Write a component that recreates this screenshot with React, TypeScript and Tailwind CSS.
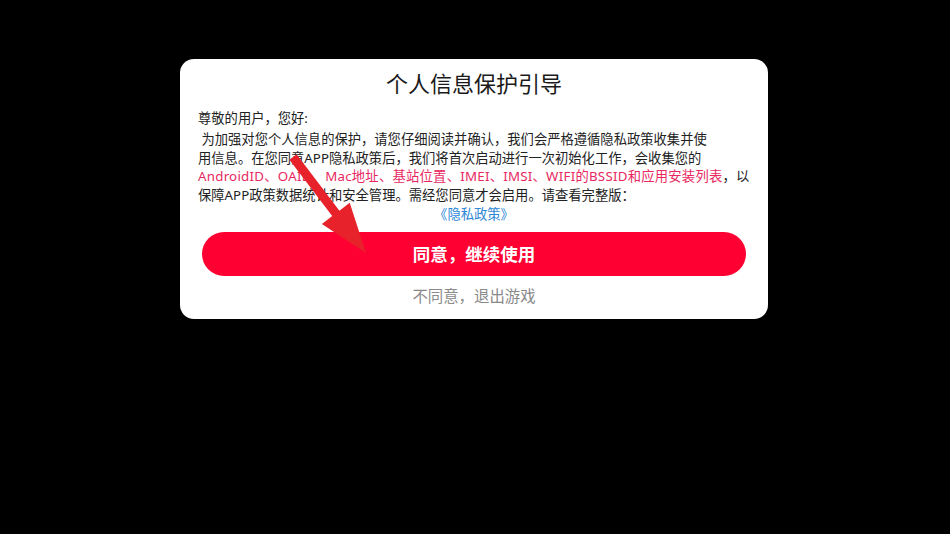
import React from "react";

const font = { fontFamily: '"Noto Sans", "Noto Sans CJK SC", sans-serif' };

export default function App() {
  return (
    <div className="relative w-[950px] h-[534px] bg-black overflow-hidden" style={font}>
      <div className="pt-[59px]">
        <div className="ml-[180px] w-[588px] rounded-[14px] bg-white px-[18px] pt-[9px] pb-[12px]">
          <h1 className="text-center text-[22px] leading-[30px] text-[#1a1a1a]">个人信息保护引导</h1>

          <div className="mt-[11px] text-[13.3px] leading-[18.8px] text-[#222]">
            <p className="mb-[2px]">尊敬的用户，您好:</p>
            <p className="whitespace-pre">{" 为加强对您个人信息的保护，请您仔细阅读并确认，我们会严格遵循隐私政策收集并使"}</p>
            <p>用信息。在您同意APP隐私政策后，我们将首次启动进行一次初始化工作，会收集您的</p>
            <p className="whitespace-nowrap tracking-[0.25px]">
              <span className="text-[#e8285f]">AndroidID、OAID、Mac地址、基站位置、IMEI、IMSI、WIFI的BSSID和应用安装列表</span>，以
            </p>
            <p>保障APP政策数据统计和安全管理。需经您同意才会启用。请查看完整版：</p>
            <p className="text-center text-[#2b86d6]">《隐私政策》</p>
          </div>

          <button className="mt-[8px] mx-[4px] w-[544px] h-[44px] rounded-full bg-[#ff0033] text-white text-[17.5px] font-bold">
            同意，继续使用
          </button>

          <p className="mt-[11px] text-center text-[15.4px] leading-[20px] text-[#8a8a8a]">不同意，退出游戏</p>
        </div>
      </div>

      {/* annotation arrow */}
      <svg className="absolute left-0 top-0 pointer-events-none" width="950" height="534" viewBox="0 0 950 534">
        <polygon
          points="296.6,154.3 339.4,210.7 349.7,202.8 366,253 321.9,224 332.2,216.1 289.4,159.7"
          fill="#e8222b"
        />
      </svg>
    </div>
  );
}
